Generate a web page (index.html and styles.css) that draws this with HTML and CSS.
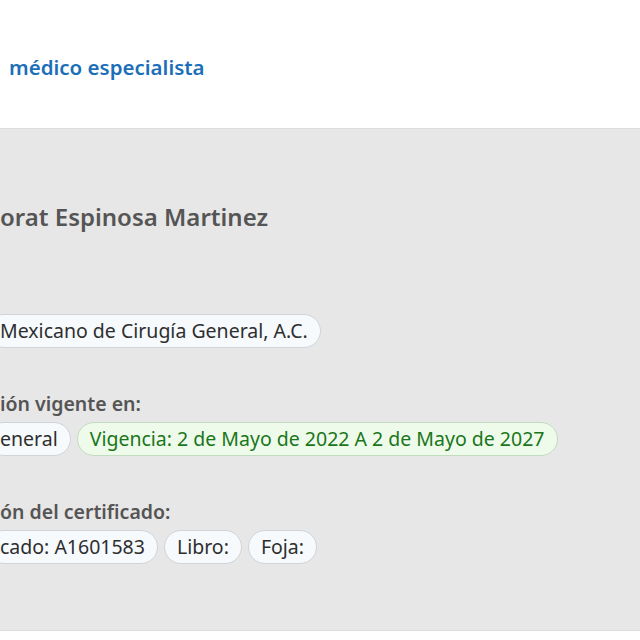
FILE: index.html
```html
<!DOCTYPE html>
<html lang="es">
  <head>
    <meta charset="UTF-8" />
    <meta name="viewport" content="width=device-width, initial-scale=1.0" />
    <title>médico especialista</title>
    <link rel="stylesheet" href="styles.css">
  </head>
  <body>
    <header class="top">
      <h1 class="top-title">médico especialista</h1>
    </header>

    <main class="profile">
      <h2 class="doctor-name">orat Espinosa Martinez</h2>

      <div class="field field-nolabel">
        <div class="pills">
          <span class="pill">Mexicano de Cirugía General, A.C.</span>
        </div>
      </div>

      <div class="field">
        <h3 class="field-label">ión vigente en:</h3>
        <div class="pills">
          <span class="pill">eneral</span>
          <span class="pill pill-valid">Vigencia: 2 de Mayo de 2022 A 2 de Mayo de 2027</span>
        </div>
      </div>

      <div class="field">
        <h3 class="field-label">ón del certificado:</h3>
        <div class="pills">
          <span class="pill">cado: A1601583</span>
          <span class="pill">Libro:</span>
          <span class="pill">Foja:</span>
        </div>
      </div>
    </main>
  </body>
</html>
```
FILE: styles.css
```css
body {
  margin: 0;
  padding: 0;
  background: #fff;
  font-family: "Noto Sans", "Open Sans", sans-serif;
  overflow: hidden;
}

.top {
  height: 128px;
  display: flex;
  align-items: center;
  padding-left: 9px;
  border-bottom: 1px solid #dcdcdc;
}

.top-title {
  margin: 0;
  padding-top: 6px;
  font-size: 20.5px;
  font-weight: 600;
  color: #1b6fb8;
  white-space: nowrap;
}

.profile {
  background: #e7e7e7;
  padding: 72px 0 66px;
  border-bottom: 1px solid #dcdcdc;
}

.doctor-name {
  margin: 0 0 50px 0;
  font-size: 24px;
  line-height: 32px;
  font-weight: 600;
  color: #555;
  white-space: nowrap;
}

.field {
  margin-bottom: 43px;
}

/* same height as a field with a label line above */
.field-nolabel {
  padding-top: 26px;
}

.field:last-child {
  margin-bottom: 0;
}

.field-label {
  margin: 0;
  font-size: 19.5px;
  line-height: 26px;
  font-weight: 600;
  color: #555;
  white-space: nowrap;
}

/* first pill of each row starts past the left edge */
.pills {
  display: flex;
  gap: 6px;
  margin-top: 5px;
  margin-left: -13px;
  white-space: nowrap;
}

.pill {
  display: inline-block;
  padding: 4px 12px;
  font-size: 19.5px;
  line-height: 24px;
  color: #2e2e2e;
  background: #f6fafd;
  border: 1px solid #d0d4d8;
  border-radius: 20px;
}

.pill-valid {
  color: #1a761a;
  background: #eefbeb;
  border-color: #c2dcbf;
}
```
